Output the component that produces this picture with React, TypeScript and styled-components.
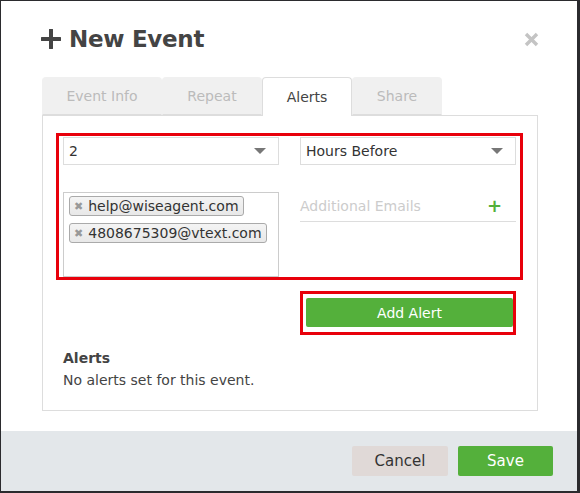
import React from 'react';
import styled, { createGlobalStyle } from 'styled-components';

const GlobalStyle = createGlobalStyle`
  html, body {
    margin: 0;
    padding: 0;
    background: #2b2b2e;
  }
  body {
    font-family: "DejaVu Sans", "Liberation Sans", sans-serif;
    color: #444;
  }
`;

const green = '#54b03b';
const highlight = '#e8000b';

const Dialog = styled.div`
  width: 576px;
  height: 490px;
  margin: 1px 0 0 1px;
  background: #fff;
  display: flex;
  flex-direction: column;
  box-sizing: border-box;
`;

const Header = styled.div`
  display: flex;
  align-items: center;
  justify-content: space-between;
  height: 76px;
  padding: 0 38px 0 40px;
  box-sizing: border-box;
`;

const Title = styled.h2`
  display: flex;
  align-items: center;
  gap: 8px;
  margin: 0;
  font-size: 23px;
  font-weight: 600;
  color: #444;
  letter-spacing: -0.3px;
`;

const CloseButton = styled.button`
  border: none;
  background: none;
  padding: 0;
  width: 16px;
  height: 16px;
  display: flex;
  align-items: center;
  justify-content: center;
  cursor: pointer;
`;

const Body = styled.div`
  flex: 1;
  padding: 0 39px 0 41px;
`;

const Tabs = styled.div`
  display: flex;
  height: 38px;
`;

const Tab = styled.div<{ active?: boolean; w: number }>`
  width: ${({ w }) => w}px;
  box-sizing: border-box;
  display: flex;
  align-items: center;
  justify-content: center;
  font-size: 14px;
  color: ${({ active }) => (active ? '#444' : '#bbb')};
  background: ${({ active }) => (active ? '#fff' : '#f0f0f0')};
  border: 1px solid ${({ active }) => (active ? '#ddd' : '#f0f0f0')};
  border-bottom: ${({ active }) => (active ? 'none' : '1px solid #ddd')};
  border-radius: 4px 4px 0 0;
  position: relative;
  z-index: ${({ active }) => (active ? 1 : 0)};
  height: ${({ active }) => (active ? '39px' : '38px')};
`;

const Panel = styled.div`
  border: 1px solid #ddd;
  height: 296px;
  box-sizing: border-box;
  padding: 17px 14px 0 13px;
`;

const Outline = styled.div`
  border: 3px solid ${highlight};
`;

const FormGrid = styled(Outline)`
  display: grid;
  grid-template-columns: 216px 216px;
  column-gap: 21px;
  row-gap: 27px;
  padding: 1px 3px 0 4px;
`;

const Select = styled.div`
  height: 28px;
  border: 1px solid #ddd;
  box-sizing: border-box;
  display: flex;
  align-items: center;
  justify-content: space-between;
  padding: 0 12px 0 5px;
  font-size: 14px;
  color: #333;
`;

const Caret = styled.span`
  width: 0;
  height: 0;
  border-left: 6px solid transparent;
  border-right: 6px solid transparent;
  border-top: 6px solid #777;
`;

const TagBox = styled.div`
  height: 85px;
  border: 1px solid #ccc;
  box-sizing: border-box;
  padding: 3px 5px;
  display: flex;
  flex-direction: column;
  align-items: flex-start;
  gap: 7px;
`;

const Tag = styled.span`
  display: inline-flex;
  align-items: center;
  gap: 5px;
  height: 20px;
  box-sizing: border-box;
  padding: 0 4px 0 4px;
  background: linear-gradient(#f4f4f4, #e8e8e8);
  border: 1px solid #aaa;
  border-radius: 3px;
  font-size: 14px;
  color: #333;
`;

const TagRemove = styled.span`
  font-size: 11px;
  font-weight: bold;
  color: #999;
`;

const EmailField = styled.div`
  height: 30px;
  margin-top: -1px;
  border-bottom: 1px solid #ddd;
  display: flex;
  align-items: center;
  justify-content: space-between;
  padding: 0 14px 0 0;
  font-size: 14px;
  color: #ccc;
`;

const AddIcon = styled.span`
  color: ${green};
  font-size: 18px;
  font-weight: bold;
  line-height: 1;
`;

const ButtonRow = styled.div`
  display: flex;
  justify-content: flex-end;
  margin: 11px 7px 0 0;
`;

const AlertOutline = styled(Outline)`
  padding: 4px 0 5px 3px;
`;

const Button = styled.button<{ variant?: 'primary' | 'muted'; w: number }>`
  width: ${({ w }) => w}px;
  height: ${({ variant }) => (variant === 'muted' ? '30px' : '29px')};
  border: none;
  border-radius: 2px;
  font-family: inherit;
  font-size: 14px;
  cursor: pointer;
  color: ${({ variant }) => (variant === 'muted' ? '#333' : '#fff')};
  background: ${({ variant }) => (variant === 'muted' ? '#e0d9d7' : green)};
`;

const AlertList = styled.div`
  margin: 12px 0 0 7px;
  font-size: 14px;
  line-height: 22px;
  color: #444;
`;

const AlertHeading = styled.div`
  font-weight: bold;
`;

const Footer = styled.div`
  height: 60px;
  background: #e3e7ea;
  display: flex;
  align-items: center;
  justify-content: flex-end;
  gap: 10px;
  padding-right: 24px;
`;

const FooterButton = styled(Button)`
  height: 30px;
  font-size: 15px;
`;

export default function App() {
  const tags = ['help@wiseagent.com', '4808675309@vtext.com'];
  return (
    <>
      <GlobalStyle />
      <Dialog>
        <Header>
          <Title>
            <svg width="20" height="20" viewBox="0 0 20 20">
              <path d="M10 1v18M1 10h18" stroke="#444" strokeWidth="4" strokeLinecap="round" />
            </svg>
            New Event
          </Title>
          <CloseButton aria-label="Close">
            <svg width="15" height="15" viewBox="0 0 15 15">
              <path d="M2 2l11 11M13 2L2 13" stroke="#c4c4c4" strokeWidth="3.4" />
            </svg>
          </CloseButton>
        </Header>
        <Body>
          <Tabs>
            <Tab w={120}>Event Info</Tab>
            <Tab w={100}>Repeat</Tab>
            <Tab w={90} active>Alerts</Tab>
            <Tab w={90}>Share</Tab>
          </Tabs>
          <Panel>
            <FormGrid>
              <Select>
                2<Caret />
              </Select>
              <Select>
                Hours Before<Caret />
              </Select>
              <TagBox>
                {tags.map((t) => (
                  <Tag key={t}>
                    <TagRemove>✖</TagRemove>
                    {t}
                  </Tag>
                ))}
              </TagBox>
              <EmailField>
                Additional Emails<AddIcon>+</AddIcon>
              </EmailField>
            </FormGrid>
            <ButtonRow>
              <AlertOutline>
                <Button w={207}>Add Alert</Button>
              </AlertOutline>
            </ButtonRow>
            <AlertList>
              <AlertHeading>Alerts</AlertHeading>
              No alerts set for this event.
            </AlertList>
          </Panel>
        </Body>
        <Footer>
          <FooterButton variant="muted" w={96}>Cancel</FooterButton>
          <FooterButton w={95}>Save</FooterButton>
        </Footer>
      </Dialog>
    </>
  );
}
